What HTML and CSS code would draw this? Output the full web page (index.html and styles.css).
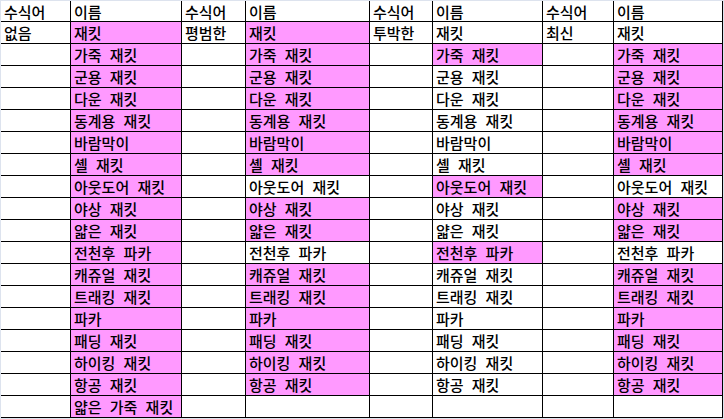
FILE: index.html
```html
<!DOCTYPE html>
<html lang="ko">
<head>
<meta charset="utf-8">
<title>재킷 수식어 표</title>
<link rel="stylesheet" href="styles.css">
</head>
<body>
<div class="sheet" role="table">
  <div class="c">수식어</div><div class="c">이름</div><div class="c">수식어</div><div class="c">이름</div><div class="c">수식어</div><div class="c">이름</div><div class="c">수식어</div><div class="c">이름</div>

  <div class="c">없음</div><div class="c p">재킷</div><div class="c">평범한</div><div class="c p">재킷</div><div class="c">투박한</div><div class="c">재킷</div><div class="c">최신</div><div class="c">재킷</div>

  <div class="c"></div><div class="c p">가죽 재킷</div><div class="c"></div><div class="c p">가죽 재킷</div><div class="c"></div><div class="c p">가죽 재킷</div><div class="c"></div><div class="c p">가죽 재킷</div>

  <div class="c"></div><div class="c p">군용 재킷</div><div class="c"></div><div class="c p">군용 재킷</div><div class="c"></div><div class="c">군용 재킷</div><div class="c"></div><div class="c p">군용 재킷</div>

  <div class="c"></div><div class="c p">다운 재킷</div><div class="c"></div><div class="c p">다운 재킷</div><div class="c"></div><div class="c">다운 재킷</div><div class="c"></div><div class="c p">다운 재킷</div>

  <div class="c"></div><div class="c p">동계용 재킷</div><div class="c"></div><div class="c p">동계용 재킷</div><div class="c"></div><div class="c">동계용 재킷</div><div class="c"></div><div class="c p">동계용 재킷</div>

  <div class="c"></div><div class="c p">바람막이</div><div class="c"></div><div class="c p">바람막이</div><div class="c"></div><div class="c">바람막이</div><div class="c"></div><div class="c p">바람막이</div>

  <div class="c"></div><div class="c p">셸 재킷</div><div class="c"></div><div class="c p">셸 재킷</div><div class="c"></div><div class="c">셸 재킷</div><div class="c"></div><div class="c p">셸 재킷</div>

  <div class="c"></div><div class="c p">아웃도어 재킷</div><div class="c"></div><div class="c">아웃도어 재킷</div><div class="c"></div><div class="c p">아웃도어 재킷</div><div class="c"></div><div class="c">아웃도어 재킷</div>

  <div class="c"></div><div class="c p">야상 재킷</div><div class="c"></div><div class="c p">야상 재킷</div><div class="c"></div><div class="c">야상 재킷</div><div class="c"></div><div class="c p">야상 재킷</div>

  <div class="c"></div><div class="c p">얇은 재킷</div><div class="c"></div><div class="c p">얇은 재킷</div><div class="c"></div><div class="c">얇은 재킷</div><div class="c"></div><div class="c p">얇은 재킷</div>

  <div class="c"></div><div class="c p">전천후 파카</div><div class="c"></div><div class="c">전천후 파카</div><div class="c"></div><div class="c p">전천후 파카</div><div class="c"></div><div class="c">전천후 파카</div>

  <div class="c"></div><div class="c p">캐쥬얼 재킷</div><div class="c"></div><div class="c p">캐쥬얼 재킷</div><div class="c"></div><div class="c">캐쥬얼 재킷</div><div class="c"></div><div class="c p">캐쥬얼 재킷</div>

  <div class="c"></div><div class="c p">트래킹 재킷</div><div class="c"></div><div class="c p">트래킹 재킷</div><div class="c"></div><div class="c">트래킹 재킷</div><div class="c"></div><div class="c p">트래킹 재킷</div>

  <div class="c"></div><div class="c p">파카</div><div class="c"></div><div class="c p">파카</div><div class="c"></div><div class="c">파카</div><div class="c"></div><div class="c p">파카</div>

  <div class="c"></div><div class="c p">패딩 재킷</div><div class="c"></div><div class="c p">패딩 재킷</div><div class="c"></div><div class="c">패딩 재킷</div><div class="c"></div><div class="c p">패딩 재킷</div>

  <div class="c"></div><div class="c p">하이킹 재킷</div><div class="c"></div><div class="c p">하이킹 재킷</div><div class="c"></div><div class="c">하이킹 재킷</div><div class="c"></div><div class="c p">하이킹 재킷</div>

  <div class="c"></div><div class="c p">항공 재킷</div><div class="c"></div><div class="c p">항공 재킷</div><div class="c"></div><div class="c">항공 재킷</div><div class="c"></div><div class="c p">항공 재킷</div>

  <div class="c"></div><div class="c p">얇은 가죽 재킷</div><div class="c"></div><div class="c"></div><div class="c"></div><div class="c"></div><div class="c"></div><div class="c"></div>
</div>
</body>
</html>
```

FILE: styles.css
```css
html, body {
  margin: 0;
  padding: 0;
  background: #dde3ee;
}

body {
  padding: 1px 0 0 1px;
  font-family: "Noto Sans CJK KR", "Noto Sans", sans-serif;
  font-size: 15px;
  font-weight: 500;
  color: #000;
}

.sheet {
  display: grid;
  grid-template-columns: 70px 111px 64px 124px 63px 110px 71px 109px;
  grid-template-rows: 21px;
  grid-auto-rows: 22px;
  width: 722px;
  background: #fff;
}

.c {
  box-sizing: border-box;
  border-right: 1px solid #000;
  border-bottom: 1px solid #000;
  padding: 1px 0 0 3px;
  line-height: 20px;
  word-spacing: 4px;
  white-space: nowrap;
  overflow: hidden;
}

.p {
  background: #ff99ff;
}
```
